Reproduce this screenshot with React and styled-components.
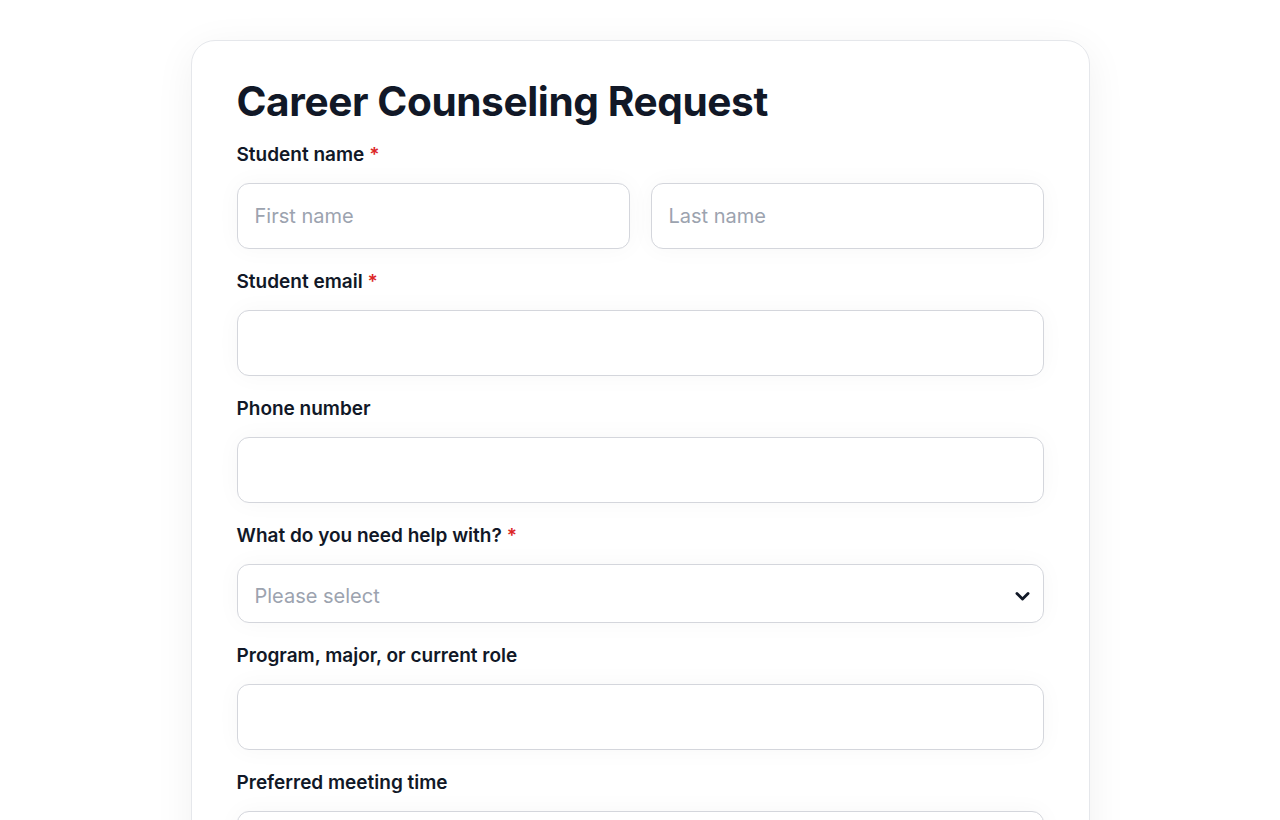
import React from "react";
import styled, { createGlobalStyle } from "styled-components";

const Global = createGlobalStyle`
  html, body { margin: 0; padding: 0; background: #ffffff; }
  body { font-family: Inter, "Noto Sans", sans-serif; color: #111827; }
  * { box-sizing: border-box; }
`;

const Page = styled.div`
  padding-top: 40px;
  display: flex;
  justify-content: center;
`;

const Card = styled.form`
  width: 899px;
  background: #fff;
  border: 1px solid #e5e7eb;
  border-radius: 24px;
  box-shadow: 0 8px 40px rgba(17, 24, 39, 0.06);
  padding: 37px 45px 40px;
  display: flex;
  flex-direction: column;
`;

const Title = styled.h1`
  margin: 0 0 17px;
  font-size: 40.6px;
  line-height: 48px;
  font-weight: 700;
  letter-spacing: -0.4px;
  color: #111827;
`;

const Field = styled.div`
  display: flex;
  flex-direction: column;
  margin-bottom: 21px;
`;

const Label = styled.label`
  font-size: 19px;
  line-height: 24px;
  font-weight: 600;
  color: #111827;
  margin-bottom: 16px;
`;

const Req = styled.span`
  color: #dc2626;
  margin-left: 5px;
`;

const Row = styled.div`
  display: grid;
  grid-template-columns: 1fr 1fr;
  gap: 21px;
`;

const Input = styled.input`
  width: 100%;
  height: 66px;
  border: 1px solid #d4d6dc;
  border-radius: 12px;
  padding: 0 17px;
  font-family: inherit;
  font-size: 20px;
  color: #111827;
  background: #fff;
  box-shadow: 0 0 24px rgba(17, 24, 39, 0.035);
  outline: none;
  &::placeholder { color: #9ca3af; }
`;

const SelectWrap = styled.div`
  position: relative;
`;

const Select = styled.select`
  width: 100%;
  height: 59px;
  appearance: none;
  border: 1px solid #d4d6dc;
  border-radius: 12px;
  padding: 5px 17px 0;
  font-family: inherit;
  font-size: 20px;
  color: #9ca3af;
  background: #fff;
  box-shadow: 0 0 24px rgba(17, 24, 39, 0.035);
  outline: none;
`;

const Chevron = styled.svg`
  position: absolute;
  right: 12px;
  top: 50%;
  transform: translateY(-40%);
  pointer-events: none;
`;

export default function App() {
  return (
    <>
      <Global />
      <Page>
        <Card onSubmit={(e) => e.preventDefault()}>
          <Title>Career Counseling Request</Title>
          <Field>
            <Label>Student name<Req>*</Req></Label>
            <Row>
              <Input placeholder="First name" />
              <Input placeholder="Last name" />
            </Row>
          </Field>
          <Field>
            <Label>Student email<Req>*</Req></Label>
            <Input type="email" />
          </Field>
          <Field>
            <Label>Phone number</Label>
            <Input type="tel" />
          </Field>
          <Field>
            <Label>What do you need help with?<Req>*</Req></Label>
            <SelectWrap>
              <Select defaultValue="">
                <option value="" disabled>Please select</option>
                <option>Resume review</option>
                <option>Interview preparation</option>
                <option>Career exploration</option>
              </Select>
              <Chevron width="19" height="19" viewBox="0 0 24 24" fill="none" stroke="#111827" strokeWidth="3.6" strokeLinecap="round" strokeLinejoin="round">
                <path d="M5 9l7 7 7-7" />
              </Chevron>
            </SelectWrap>
          </Field>
          <Field>
            <Label>Program, major, or current role</Label>
            <Input />
          </Field>
          <Field>
            <Label>Preferred meeting time</Label>
            <Input />
          </Field>
        </Card>
      </Page>
    </>
  );
}
